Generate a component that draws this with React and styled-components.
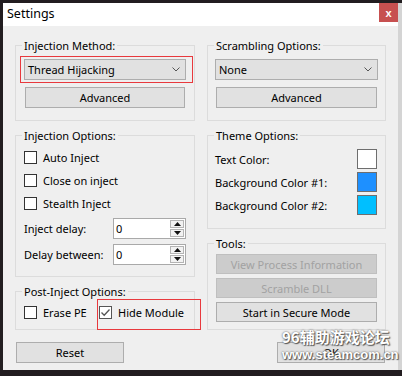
import styled, { createGlobalStyle } from 'styled-components'

const Global = createGlobalStyle`
  html, body { margin: 0; padding: 0; background: #221d20; }
  body { font-family: "Noto Sans", "Liberation Sans", sans-serif; font-size: 11px; color: #000; }
  * { box-sizing: border-box; }
`

const Screen = styled.div`
  position: relative;
  display: flex;
  width: 402px;
  height: 376px;
  padding: 3px 0 0 3px;
  overflow: hidden;
`

const Window = styled.div`
  width: 395px;
  height: 367px;
  display: flex;
  flex-direction: column;
  background: #efefef;
`

const EdgeStrip = styled.div`
  width: 4px;
  height: 367px;
  background: #d4d4d4;
`

const TitleBar = styled.div`
  height: 23px;
  background: #fff;
  display: flex;
  align-items: flex-start;
  justify-content: space-between;
`

const Title = styled.div`
  font-size: 12.5px;
  line-height: 22px;
  padding-left: 4px;
`

const CloseButton = styled.div`
  width: 19px;
  height: 19px;
  background: #c75050;
  color: #fff;
  font: bold 11px "Liberation Sans", sans-serif;
  display: flex;
  align-items: center;
  justify-content: center;
`

const Body = styled.div`
  flex: 1;
  display: grid;
  grid-template-columns: 180px 179px;
  column-gap: 12px;
  padding: 12px 12px 0 12px;
  align-items: start;
`

const Column = styled.div`
  display: flex;
  flex-direction: column;
  gap: 7px;
`

const Group = styled.fieldset`
  margin: 0;
  padding: 0;
  min-width: 0;
  height: ${p => p.$h}px;
  border: 1px solid #dcdcdc;
`

const Legend = styled.legend`
  margin-left: 6px;
  padding: 0 2px;
  line-height: 15px;
  font-size: 11px;
`

const Highlight = styled.div`
  display: flex;
  align-items: flex-start;
  flex: none;
  width: ${p => p.$w}px;
  height: ${p => p.$h}px;
  margin: ${p => p.$m};
  padding: ${p => p.$pad};
  border: 1px solid #e8393d;
`

const Select = styled.div`
  display: flex;
  align-items: center;
  justify-content: space-between;
  width: ${p => p.$w}px;
  height: 21px;
  margin: ${p => p.$m || 0};
  padding: 0 5px 0 3px;
  background: #e1e1e1;
  border: 1px solid #adadad;
`

const Button = styled.div`
  display: flex;
  align-items: center;
  justify-content: center;
  width: ${p => p.$w}px;
  height: ${p => p.$h || 21}px;
  margin: ${p => p.$m || 0};
  align-self: ${p => p.$align || 'auto'};
  background: ${p => (p.$disabled ? '#cccccc' : '#e1e1e1')};
  border: 1px solid ${p => (p.$disabled ? '#bfbfbf' : '#adadad')};
  color: ${p => (p.$disabled ? '#a2a2a2' : '#000')};
`

const OptionList = styled.div`
  display: flex;
  flex-direction: column;
  margin: 3px 0 0 8px;
`

const CheckRow = styled.div`
  display: flex;
  align-items: center;
  gap: 6px;
  height: 23px;
`

const Box = styled.span`
  display: flex;
  align-items: center;
  justify-content: center;
  width: 13px;
  height: 13px;
  flex: none;
  background: #fff;
  border: 1px solid ${p => (p.$checked ? '#555' : '#333')};
`

const SpinRow = styled.div`
  display: flex;
  align-items: center;
  margin: ${p => p.$mt}px 0 0 8px;
`

const SpinLabel = styled.span`
  width: 89px;
`

const SpinBox = styled.div`
  display: flex;
  width: 73px;
  height: 21px;
  background: #fff;
  border: 1px solid #a9a9a9;
`

const SpinValue = styled.span`
  flex: 1;
  padding-left: 2px;
  line-height: 19px;
`

const SpinButtons = styled.div`
  display: flex;
  flex-direction: column;
  width: 15px;
  padding: 1px 1px 1px 0;
  gap: 1px;
`

const SpinButton = styled.div`
  flex: 1;
  display: flex;
  align-items: center;
  justify-content: center;
  background: #f2f2f2;
  border: 1px solid #b4b4b4;
`

const ThemeList = styled.div`
  display: flex;
  flex-direction: column;
  gap: 3px;
  margin-top: 6px;
`

const ThemeRow = styled.div`
  display: flex;
  align-items: center;
  justify-content: space-between;
  height: 20px;
  padding: 0 8px 0 7px;
`

const Swatch = styled.span`
  width: 20px;
  height: 20px;
  background: ${p => p.$color};
  border: 1px solid #6e6e6e;
`

const ToolList = styled.div`
  display: flex;
  flex-direction: column;
  gap: 4px;
  margin: 3px 0 0 8px;
`

const PostRow = styled.div`
  display: flex;
  align-items: flex-start;
  padding-left: 8px;
`

const CheckItem = styled.div`
  display: flex;
  align-items: center;
  flex: none;
  gap: 6px;
  width: ${p => (p.$w ? `${p.$w}px` : 'auto')};
  padding-top: ${p => p.$pt || 0}px;
  line-height: 13px;
`

const Watermark = styled.div`
  position: absolute;
  left: 282px;
  top: 327px;
  color: #fff;
  font-weight: bold;
  text-shadow: 0 0 2px #4a4a4a, 1px 1px 1px #5a5a5a;
  pointer-events: none;
`

const MarkTitle = styled.div`
  font: bold 15px "Noto Sans CJK SC", "Noto Sans", sans-serif;
  line-height: 20px;
`

const MarkUrl = styled.div`
  font: bold 13px "Liberation Sans", sans-serif;
  line-height: 15px;
`

const Chevron = () => (
  <svg width="8" height="5" viewBox="0 0 8 5">
    <polyline points="0.5,0.5 4,4 7.5,0.5" fill="none" stroke="#555" strokeWidth="1" />
  </svg>
)

const Arrow = ({ down }) => (
  <svg width="7" height="4" viewBox="0 0 7 4">
    <polygon points={down ? '0,0 7,0 3.5,4' : '0,4 7,4 3.5,0'} fill="#111" />
  </svg>
)

const Check = () => (
  <svg width="11" height="11" viewBox="0 0 11 11">
    <polyline points="1.5,5.5 4.2,8.3 9.5,2.5" fill="none" stroke="#555" strokeWidth="1.3" />
  </svg>
)

const Spinner = ({ label, value, mt }) => (
  <SpinRow $mt={mt}>
    <SpinLabel>{label}</SpinLabel>
    <SpinBox>
      <SpinValue>{value}</SpinValue>
      <SpinButtons>
        <SpinButton><Arrow /></SpinButton>
        <SpinButton><Arrow down /></SpinButton>
      </SpinButtons>
    </SpinBox>
  </SpinRow>
)

export default function App() {
  return (
    <Screen>
      <Global />
      <Window>
        <TitleBar>
          <Title>Settings</Title>
          <CloseButton>x</CloseButton>
        </TitleBar>
        <Body>
          <Column>
            <Group $h={83}>
              <Legend>Injection Method:</Legend>
              <Highlight $w={173} $h={27} $m="3px 0 0 4px" $pad="2px 6px 2px 3px">
                <Select $w={162}>Thread Hijacking<Chevron /></Select>
              </Highlight>
              <Button $w={160} $m="4px 0 0 9px">Advanced</Button>
            </Group>

            <Group $h={149}>
              <Legend>Injection Options:</Legend>
              <OptionList>
                <CheckRow><Box />Auto Inject</CheckRow>
                <CheckRow><Box />Close on inject</CheckRow>
                <CheckRow><Box />Stealth Inject</CheckRow>
              </OptionList>
              <Spinner label="Inject delay:" value="0" mt={3} />
              <Spinner label="Delay between:" value="0" mt={5} />
            </Group>

            <Group $h={46}>
              <Legend>Post-Inject Options:</Legend>
              <PostRow>
                <CheckItem $w={73} $pt={7}><Box />Erase PE</CheckItem>
                <Highlight $w={104} $h={31} $m="0" $pad="6px 0 0 1px">
                  <CheckItem><Box $checked><Check /></Box>Hide Module</CheckItem>
                </Highlight>
              </PostRow>
            </Group>

            <Button $w={108} $m="5px 0 0 1px">Reset</Button>
          </Column>

          <Column>
            <Group $h={83}>
              <Legend>Scrambling Options:</Legend>
              <Select $w={163} $m="6px 0 0 7px">None<Chevron /></Select>
              <Button $w={161} $m="7px 0 0 8px">Advanced</Button>
            </Group>

            <Group $h={101}>
              <Legend>Theme Options:</Legend>
              <ThemeList>
                <ThemeRow>Text Color:<Swatch $color="#ffffff" /></ThemeRow>
                <ThemeRow>Background Color #1:<Swatch $color="#1e90ff" /></ThemeRow>
                <ThemeRow>Background Color #2:<Swatch $color="#00bfff" /></ThemeRow>
              </ThemeList>
            </Group>

            <Group $h={94}>
              <Legend>Tools:</Legend>
              <ToolList>
                <Button $w={161} $h={20} $disabled>View Process Information</Button>
                <Button $w={161} $h={20} $disabled>Scramble DLL</Button>
                <Button $w={161} $h={20}>Start in Secure Mode</Button>
              </ToolList>
            </Group>

            <Button $w={108} $m="5px 1px 0 0" $align="flex-end">OK</Button>
          </Column>
        </Body>
      </Window>
      <EdgeStrip />
      <Watermark>
        <MarkTitle>96辅助游戏论坛</MarkTitle>
        <MarkUrl>www.steamcom.cn</MarkUrl>
      </Watermark>
    </Screen>
  )
}
